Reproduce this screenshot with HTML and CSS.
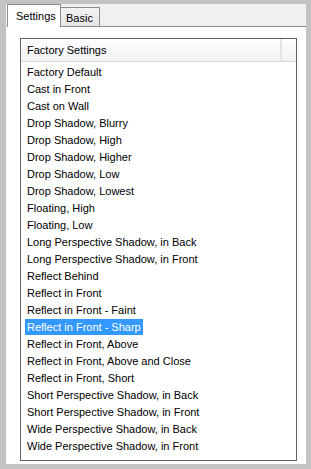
FILE: index.html
```html
<!DOCTYPE html>
<html>
<head>
<meta charset="utf-8">
<link rel="stylesheet" href="styles.css">
</head>
<body>
<div class="window">
  <div class="tabs">
    <div class="tab active">Settings</div>
    <div class="tab">Basic</div>
  </div>
  <div class="panel">
    <div class="listbox">
      <div class="header">
        <div class="hcell">Factory Settings</div>
        <div class="hcell rest"></div>
      </div>
      <ul class="items">
        <li><span>Factory Default</span></li>
        <li><span>Cast in Front</span></li>
        <li><span>Cast on Wall</span></li>
        <li><span>Drop Shadow, Blurry</span></li>
        <li><span>Drop Shadow, High</span></li>
        <li><span>Drop Shadow, Higher</span></li>
        <li><span>Drop Shadow, Low</span></li>
        <li><span>Drop Shadow, Lowest</span></li>
        <li><span>Floating, High</span></li>
        <li><span>Floating, Low</span></li>
        <li><span>Long Perspective Shadow, in Back</span></li>
        <li><span>Long Perspective Shadow, in Front</span></li>
        <li><span>Reflect Behind</span></li>
        <li><span>Reflect in Front</span></li>
        <li><span>Reflect in Front - Faint</span></li>
        <li class="selected"><span>Reflect in Front - Sharp</span></li>
        <li><span>Reflect in Front, Above</span></li>
        <li><span>Reflect in Front, Above and Close</span></li>
        <li><span>Reflect in Front, Short</span></li>
        <li><span>Short Perspective Shadow, in Back</span></li>
        <li><span>Short Perspective Shadow, in Front</span></li>
        <li><span>Wide Perspective Shadow, in Back</span></li>
        <li><span>Wide Perspective Shadow, in Front</span></li>
      </ul>
    </div>
  </div>
</div>
</body>
</html>
```

FILE: styles.css
```css
html, body {
  margin: 0;
  padding: 0;
}
body {
  background: #c3c3c3;
  width: 311px;
  height: 469px;
  overflow: hidden;
  font-family: "Liberation Sans", Arial, sans-serif;
  font-size: 11px;
  color: #000;
}
.window {
  position: relative;
  margin: 4px 5px 0 6px;
  height: 460px;
  background: #f0f0f0;
  border-left: 1px solid #f7f7f7;
  display: flex;
  flex-direction: column;
}
.tabs {
  display: flex;
  align-items: flex-end;
  height: 22px;
  position: relative;
  z-index: 1;
}
.tab {
  box-sizing: border-box;
  height: 19px;
  padding: 2px 6px 0 5px;
  border: 1px solid #898c95;
  border-bottom: none;
  border-left: none;
  background: linear-gradient(#f3f3f3, #e5e5e5);
  line-height: 16px;
}
.tab.active {
  height: 23px;
  margin-bottom: -1px;
  background: #fff;
  border-left: 1px solid #898c95;
  padding: 3px 7px 0 8px;
  width: 54px;
}
.panel {
  flex: 1;
  background: #fff;
  border-top: 1px solid #898c95;
  padding: 11px 9px 3px 13px;
}
.listbox {
  border: 1px solid #646464;
  height: 421px;
  background: #fff;
  overflow: hidden;
}
.header {
  display: flex;
  height: 22px;
  border-bottom: 1px solid #d5d5d5;
  background: linear-gradient(#ffffff 0%, #f7f8fa 40%, #f1f2f4 100%);
}
.hcell {
  width: 253px;
  padding-left: 6px;
  line-height: 22px;
  border-right: 2px solid #e4e5e8;
}
.hcell.rest {
  flex: 1;
  width: auto;
  border-right: none;
  padding-left: 0;
}
.items {
  list-style: none;
  margin: 2px 0 0 0;
  padding: 0 0 0 4px;
}
.items li {
  height: 17px;
  line-height: 17px;
}
.items li span {
  display: inline-block;
  padding: 0 2px;
  height: 16px;
  line-height: 16px;
}
.items li.selected span {
  background: #3399ff;
  color: #fff;
}
```
